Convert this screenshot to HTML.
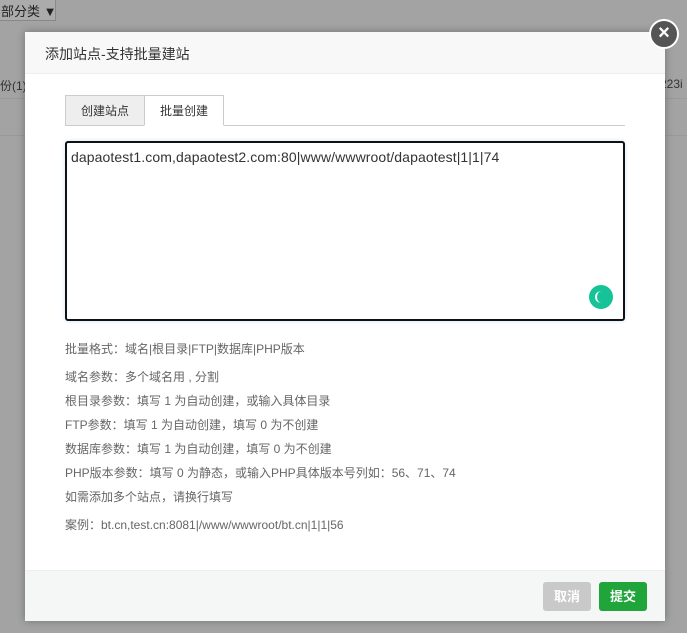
<!DOCTYPE html>
<html><head><meta charset="utf-8"><style>
*{box-sizing:border-box;margin:0;padding:0}
body{width:687px;height:633px;overflow:hidden;background:#a3a3a3;font-family:"Liberation Sans","Noto Sans CJK SC",sans-serif;position:relative}
.sel{position:absolute;left:-2px;top:-6px;width:58px;height:27px;border:1px solid #888;background:#ababab;font-size:13px;color:#222;padding:6px 0 0 2px;white-space:nowrap;overflow:hidden}
.row{position:absolute;left:0;right:0;top:98px;height:1px;background:#999}
.row2{position:absolute;left:0;right:0;top:135px;height:1px;background:#999}
.lt{position:absolute;top:77px;font-size:12px;color:#333}
.dlg{position:absolute;left:25px;top:32px;width:640px;height:589px;background:#fff;box-shadow:0 0 8px rgba(0,0,0,.3)}
.hd{height:42px;background:#f8f8f8;border-bottom:1px solid #eee;font-size:14px;color:#333;padding:12px 0 0 20px}
.tabs{position:absolute;left:40px;top:63px;width:560px;height:31px;border-bottom:1px solid #ccc}
.tab{position:absolute;top:0;height:31px;width:80px;font-size:12px;color:#333;text-align:center;line-height:30px;border:1px solid #ccc}
.t1{left:0;background:#eeeeee;border-bottom:1px solid #ccc}
.t2{left:79px;background:#fff;border-bottom:1px solid #fff}
.ta{position:absolute;left:40px;top:109px;width:560px;height:180px;border:2px solid #111;border-radius:3px;box-shadow:0 0 4px #cde3ff;font-size:14px;color:#333;padding:6px 0 0 4px;letter-spacing:0.1px}
.g{position:absolute;left:564px;top:253px;width:24px;height:24px;border-radius:50%;background:#16c399}
.g:after{content:"";position:absolute;left:6px;top:6px;width:11px;height:12px;border-radius:50%;border-left:2px solid #fff;}
.tx{position:absolute;left:40px;font-size:12px;color:#666;white-space:nowrap}
.ft{position:absolute;left:0;right:0;bottom:0;height:51px;background:#f5f6f6;border-top:1px solid #eee}
.b{position:absolute;top:11px;width:48px;height:29px;border-radius:3px;color:#fff;font-size:13px;font-weight:bold;text-align:center;line-height:29px}
.x{position:absolute;left:649px;top:19px;width:30px;height:30px;border-radius:50%;background:#555;border:2px solid #fff;color:#fff;font-size:20px;text-align:center;line-height:25px;font-weight:bold}
</style></head><body>
<div class="sel">部分类 ▼</div>
<div class="lt" style="left:0">份(1)</div>
<div class="lt" style="left:660px">223i</div>
<div class="row"></div><div class="row2"></div>
<div class="dlg">
<div class="hd">添加站点-支持批量建站</div>
<div class="tabs"><div class="tab t1">创建站点</div><div class="tab t2">批量创建</div></div>
<div class="ta">dapaotest1.com,dapaotest2.com:80|www/wwwroot/dapaotest|1|1|74</div>
<div class="g"></div>
<div class="tx" style="top:308px">批量格式：域名|根目录|FTP|数据库|PHP版本</div>
<div class="tx" style="top:336px">域名参数：多个域名用 , 分割</div>
<div class="tx" style="top:360px">根目录参数：填写 1 为自动创建，或输入具体目录</div>
<div class="tx" style="top:384px">FTP参数：填写 1 为自动创建，填写 0 为不创建</div>
<div class="tx" style="top:408px">数据库参数：填写 1 为自动创建，填写 0 为不创建</div>
<div class="tx" style="top:432px">PHP版本参数：填写 0 为静态，或输入PHP具体版本号列如：56、71、74</div>
<div class="tx" style="top:456px">如需添加多个站点，请换行填写</div>
<div class="tx" style="top:484px">案例：bt.cn,test.cn:8081|/www/wwwroot/bt.cn|1|1|56</div>
<div class="ft"><div class="b" style="left:518px;background:#c9c9c9">取消</div><div class="b" style="left:574px;background:#20a53a">提交</div></div>
</div>
<div class="x">×</div>
</body></html>
